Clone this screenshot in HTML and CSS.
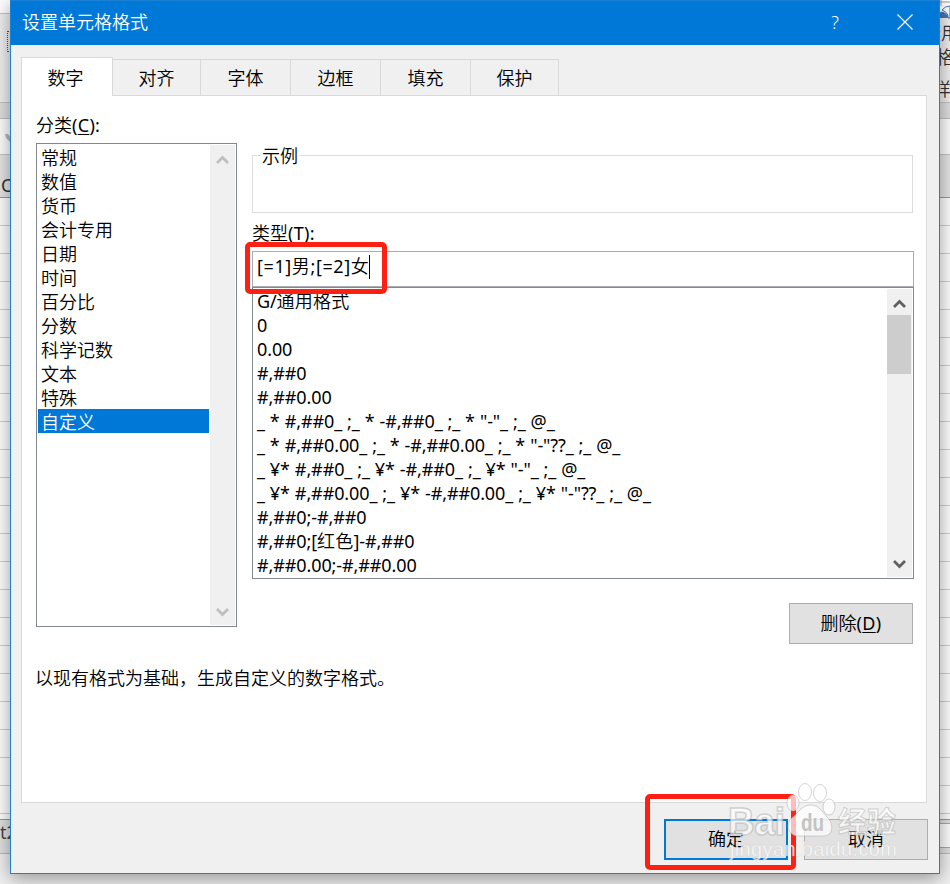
FILE: index.html
```html
<!DOCTYPE html>
<html lang="zh-CN">
<head>
  <meta charset="UTF-8" />
  <title>设置单元格格式</title>
  <link rel="stylesheet" href="styles.css">
</head>
<body>
  <!-- spreadsheet behind the dialog -->
  <div class="sheet">
    <div class="ribbon"></div>
    <div class="ribbon-foot"></div>
    <div class="formula-bar"></div>
    <div class="column-head">C</div>
    <div class="cells"></div>
    <div class="sheet-tabs"><span>t2</span><div class="sheet-scroll"></div></div>
    <div class="status"></div>
  </div>
  <svg class="sheet-mark" width="8" height="12" viewBox="0 0 8 12"><path d="M1 2h3l4 5v5L2 6z" fill="#bbb"/></svg>
  <div class="sheet-focus"></div>
  <div class="style-label">
    <svg width="30" height="20" viewBox="0 0 30 20"><path d="M0 2h30M2 0v6" stroke="#999"/><path d="M0 13q4-3 7 1q3 1 2 4H0z" fill="#4478b4"/><path d="M3 10q3-4 8-4v12h-2q1-5-6-8z" fill="#fff" stroke="#4478b4"/></svg>
    <span>套用</span>
    <span>格</span>
    <span class="last">样</span>
  </div>

  <div class="dialog">
    <div class="titlebar">
      <span class="title">设置单元格格式</span>
      <span class="help">?</span>
      <svg class="close" width="16" height="16" viewBox="0 0 16 16"><path d="M.5.5l15 15M15.5.5l-15 15" stroke="#fff" stroke-width="1.2"/></svg>
    </div>

    <div class="content">
      <div class="tabs">
        <div class="tab active">数字</div>
        <div class="tab">对齐</div>
        <div class="tab wide">字体</div>
        <div class="tab wide">边框</div>
        <div class="tab wide">填充</div>
        <div class="tab">保护</div>
      </div>

      <div class="panel">
        <div class="columns">
          <div class="left">
            <div class="label">分类<span class="key">(<u>C</u>):</span></div>
            <div class="listbox categories">
              <ul class="items">
                <li>常规</li>
                <li>数值</li>
                <li>货币</li>
                <li>会计专用</li>
                <li>日期</li>
                <li>时间</li>
                <li>百分比</li>
                <li>分数</li>
                <li>科学记数</li>
                <li>文本</li>
                <li>特殊</li>
                <li class="selected">自定义</li>
              </ul>
              <div class="scrollbar disabled">
                <svg width="13" height="10" viewBox="0 0 13 10"><path d="M1 8l5.5-5.5L12 8"/></svg>
                <svg width="13" height="10" viewBox="0 0 13 10"><path d="M1 2l5.5 5.5L12 2"/></svg>
              </div>
            </div>
          </div>

          <div class="right">
            <div class="sample"><span class="legend">示例</span></div>
            <div class="label type-label">类型<span class="key">(<u>T</u>):</span></div>
            <div class="type-input"><span>[=1]<span class="cn">男</span>;[=2]<span class="cn">女</span></span><i class="caret"></i><div class="mark mark-input"></div></div>
            <div class="listbox formats">
              <ul class="items">
                <li>G/<span class="cn">通用格式</span></li>
                <li>0</li>
                <li>0.00</li>
                <li>#,##0</li>
                <li>#,##0.00</li>
                <li class="accounting">_ * #,##0_ ;_ * -#,##0_ ;_ * "-"_ ;_ @_ </li>
                <li class="accounting">_ * #,##0.00_ ;_ * -#,##0.00_ ;_ * "-"??_ ;_ @_ </li>
                <li class="accounting">_ ¥* #,##0_ ;_ ¥* -#,##0_ ;_ ¥* "-"_ ;_ @_ </li>
                <li class="accounting">_ ¥* #,##0.00_ ;_ ¥* -#,##0.00_ ;_ ¥* "-"??_ ;_ @_ </li>
                <li>#,##0;-#,##0</li>
                <li>#,##0;[<span class="cn">红色</span>]-#,##0</li>
                <li>#,##0.00;-#,##0.00</li>
              </ul>
              <div class="scrollbar">
                <svg width="13" height="10" viewBox="0 0 13 10"><path d="M1 8l5.5-5.5L12 8"/></svg>
                <div class="thumb"></div>
                <svg width="13" height="10" viewBox="0 0 13 10"><path d="M1 2l5.5 5.5L12 2"/></svg>
              </div>
            </div>
            <div class="button delete">删除<span class="key">(<u>D</u>)</span></div>
          </div>
        </div>
        <p class="hint">以现有格式为基础，生成自定义的数字格式。</p>
      </div>

      <div class="footer">
        <div class="button ok">确定<div class="mark mark-ok"></div></div>
        <div class="button">取消</div>
      </div>
    </div>
  </div>

  <svg class="watermark" width="190" height="100" viewBox="0 0 190 100">
    <g fill="#fff" fill-opacity=".7" stroke="#aaa" stroke-opacity=".5">
      <text x="8" y="60" class="wm-brand" textLength="57" lengthAdjust="spacingAndGlyphs">Bai</text>
      <ellipse cx="73" cy="28" rx="6" ry="8"/>
      <ellipse cx="85" cy="17" rx="6.5" ry="8.5"/>
      <ellipse cx="100" cy="18" rx="6.5" ry="8.5"/>
      <ellipse cx="109" cy="32" rx="6" ry="8"/>
      <path d="M91 30c8 0 11 7 16 12c6 5 8 19-4 19H79c-12 0-14-14-6-19c6-5 9-12 18-12z"/>
      <text x="118" y="58" class="wm-cjk" textLength="58">经验</text>
      <text x="10" y="81" class="wm-url" textLength="167">jingyan.baidu.com</text>
    </g>
    <text x="81" y="56" class="wm-du" textLength="23" lengthAdjust="spacingAndGlyphs">du</text>
  </svg>
</body>
</html>
```

FILE: styles.css
```css
* {
  box-sizing: border-box;
}

body {
  margin: 0;
  width: 950px;
  height: 884px;
  position: relative;
  overflow: hidden;
  font-family: "Noto Sans", "Noto Sans CJK SC", sans-serif;
  font-size: 18px;
  font-weight: 350;
  line-height: 24px;
  color: #000;
}

/* background sheet */
.sheet {
  display: flex;
  flex-direction: column;
  height: 884px;
  background: #f0f0f0;
  font-weight: 400;
}

.ribbon {
  height: 103px;
  background: linear-gradient(#fff 0 13px, #c6c6c6 13px 14px, #f0f0f0 14px);
  border-bottom: 1px solid #c6c6c6;
}

.ribbon-foot {
  height: 16px;
  background: #e0e0e0;
  border-bottom: 1px solid #c0c0c0;
}

.formula-bar {
  height: 36px;
  background: #fff;
  border-bottom: 1px solid #c6c6c6;
}

.column-head {
  height: 43px;
  padding: 18px 0 0 1px;
  background: #e6e6e6;
  border-bottom: 1px solid #999;
  color: #333;
}

.cells {
  height: 621px;
  background: repeating-linear-gradient(#fff 0 27px, #cfcfcf 27px 28px);
}

.sheet-tabs {
  display: flex;
  justify-content: space-between;
  height: 35px;
  background: #e2e2e2;
  border-top: 1px solid #999;
  border-bottom: 1px solid #bbb;
  color: #444;
}

.sheet-scroll {
  width: 40px;
  height: 25px;
  margin-top: 3px;
  background: #fff;
  border-top: 1px solid #aaa;
  border-bottom: 1px solid #aaa;
}

.sheet-mark {
  position: absolute;
  left: 4px;
  top: 132px;
}

.sheet-focus {
  position: absolute;
  left: 7px;
  top: 31px;
  width: 10px;
  height: 21px;
  border: 1px dotted #555;
}

.style-label {
  position: absolute;
  left: 932px;
  top: 0;
  width: 36px;
  display: flex;
  flex-direction: column;
  color: #333;
}

.style-label svg {
  margin-left: 7px;
}

.style-label span {
  height: 24px;
  margin: 1px 0 -1px -9px;
  white-space: nowrap;
}

.style-label span + span {
  margin-left: 4px;
}

.style-label .last {
  margin-top: 9px;
  margin-left: 1px;
}

/* dialog */
.dialog {
  position: absolute;
  left: 10px;
  top: 0;
  width: 930px;
  height: 874px;
  border: 1px solid #1a80d4;
  background: #f0f0f0;
  box-shadow: 0 4px 18px rgba(0, 0, 0, 0.4);
}

.titlebar {
  display: flex;
  align-items: center;
  height: 44px;
  padding: 0 26px 2px 11px;
  background: #0078d7;
  color: #fff;
}

.title {
  flex: 1;
}

.help {
  margin-right: 58px;
}

.content {
  padding: 12px 12px 0 10px;
}

.tabs {
  position: relative;
  display: flex;
  align-items: flex-end;
  height: 39px;
}

.tab {
  width: 88px;
  height: 37px;
  border: 1px solid #d9d9d9;
  border-left: none;
  line-height: 36px;
  text-align: center;
}

.tab.wide {
  width: 90px;
}

.tab.active {
  z-index: 1;
  width: 92px;
  height: 39px;
  padding-right: 3px;
  border-left: 1px solid #d9d9d9;
  border-bottom: none;
  background: #fff;
  line-height: 40px;
}

.panel {
  height: 708px;
  margin-top: -1px;
  padding: 17px 12px 0 14px;
  border: 1px solid #d9d9d9;
  background: #fff;
}

.columns {
  display: flex;
  gap: 15px;
}

.left {
  width: 201px;
}

.label {
  height: 30px;
}

.key {
  font-weight: 400;
  letter-spacing: 0.3px;
}

.cn {
  font-weight: 350;
}

u {
  text-decoration-thickness: 1px;
  text-underline-offset: 2px;
}

.listbox {
  display: flex;
  justify-content: space-between;
  padding: 1px;
  border: 1px solid #828790;
  background: #fff;
}

.categories {
  height: 484px;
}

.items {
  list-style: none;
  margin: 0;
  padding: 0;
  width: 171px;
}

.items li {
  height: 24px;
  padding-left: 3px;
  white-space: pre;
}

.categories li {
  line-height: 26px;
}

.formats .items {
  font-weight: 400;
  letter-spacing: -0.1px;
}

.formats .accounting {
  word-spacing: 0.4px;
}

.formats .cn {
  letter-spacing: 0.2px;
}

.items .selected {
  background: #0078d7;
  color: #fff;
}

.scrollbar {
  display: flex;
  flex-direction: column;
  align-items: center;
  justify-content: space-between;
  width: 25px;
  padding: 10px 0 8px;
  background: #f0f0f0;
}

.scrollbar path {
  fill: none;
  stroke: #606060;
  stroke-width: 2.8;
}

.scrollbar.disabled path {
  stroke: #bfbfbf;
}

.formats .scrollbar svg:first-child {
  margin-bottom: 6px;
}

.thumb {
  width: 24px;
  height: 59px;
  margin: 0 1px auto 0;
  background: #cdcdcd;
}

.right {
  flex: 1;
  padding-top: 42px;
}

.sample {
  width: 661px;
  height: 58px;
  border: 1px solid #dcdcdc;
}

.legend {
  display: block;
  width: 38px;
  margin: -12px 0 0 8px;
  padding-left: 1px;
  background: #fff;
}

.type-label {
  height: 38px;
  padding-top: 8px;
}

.type-input {
  position: relative;
  display: flex;
  width: 662px;
  height: 36px;
  padding: 2px 4px;
  border: 1px solid #abadb3;
  font-weight: 400;
  letter-spacing: 0.6px;
}

.caret {
  width: 1px;
  height: 24px;
  margin-top: 1px;
  background: #000;
}

.mark {
  position: absolute;
  border: 5px solid #ff2014;
  border-radius: 5px;
}

.mark-input {
  left: -8px;
  top: -10px;
  width: 142px;
  height: 52px;
}

.formats {
  width: 662px;
  height: 292px;
}

.button {
  width: 124px;
  height: 41px;
  border: 1px solid #adadad;
  background: #e1e1e1;
  line-height: 39px;
  text-align: center;
}

.delete {
  margin: 24px 0 0 537px;
}

.hint {
  margin: 22px 0 0 -1px;
}

.footer {
  display: flex;
  justify-content: flex-end;
  gap: 16px;
  margin: 16px -1px 0 0;
}

.ok {
  position: relative;
  border: 2px solid #0078d7;
  line-height: 37px;
}

.mark-ok {
  left: -21px;
  top: -27px;
  width: 151px;
  height: 76px;
}

/* site watermark */
.watermark {
  position: absolute;
  left: 720px;
  top: 775px;
}

.wm-brand {
  font: bold 38px "Liberation Sans", sans-serif;
  stroke-width: 1.5;
}

.wm-cjk {
  font: bold 29px "Noto Sans CJK SC", sans-serif;
}

.wm-url {
  font: 20px "Liberation Sans", sans-serif;
  fill-opacity: 0.8;
  stroke-width: 0.3;
}

.wm-du {
  font: bold 24px "Liberation Sans", sans-serif;
  fill: #c4c4c4;
}
```
